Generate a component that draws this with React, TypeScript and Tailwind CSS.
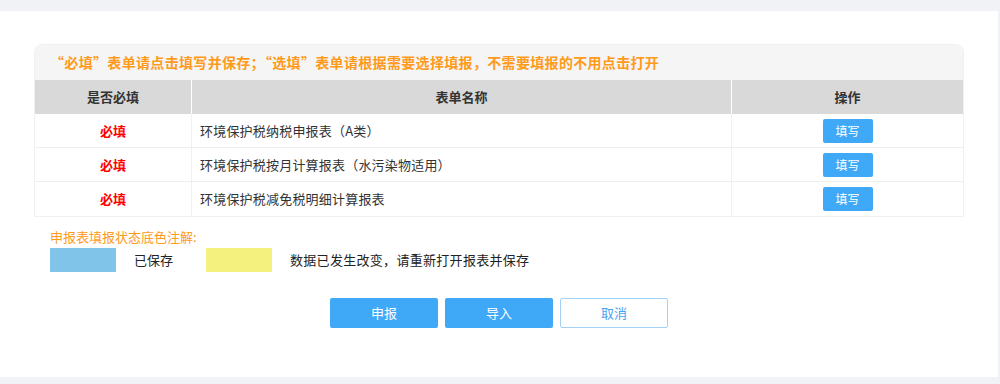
import React from "react";

const rows = [
  "环境保护税纳税申报表（A类）",
  "环境保护税按月计算报表（水污染物适用）",
  "环境保护税减免税明细计算报表",
];

export default function App() {
  return (
    <div
      lang="zh-CN"
      className="h-[384px] w-[1000px] bg-[#f0f2f5] pt-[11px] pb-[7px] pr-[2px]"
      style={{ fontFamily: '"Noto Sans CJK SC", "Noto Sans", sans-serif' }}
    >
      <div className="h-full bg-white px-[34px] pt-[33px] flex flex-col">
        <div className="rounded-t-[8px] border border-[#f0f0f0] bg-white">
          <div className="h-[35px] bg-[#f5f5f5] rounded-t-[8px] flex items-center pl-[15px] text-[14px] font-bold tracking-[0.33px] text-[#ff9a1a]">
            “必填”表单请点击填写并保存；“选填”表单请根据需要选择填报，不需要填报的不用点击打开
          </div>
          <div className="grid grid-cols-[157px_540px_1fr] h-[34px] bg-[#d9d9d9] text-[13px] font-bold text-[#333]">
            <div className="flex items-center justify-center border-r border-white">是否必填</div>
            <div className="flex items-center justify-center border-r border-white">表单名称</div>
            <div className="flex items-center justify-center">操作</div>
          </div>
          {rows.map((r, i) => (
            <div
              key={i}
              className={`grid grid-cols-[157px_540px_1fr] h-[34px] text-[13px] text-[#333] ${i < rows.length - 1 ? "border-b border-[#efefef]" : ""}`}
            >
              <div className="flex items-center justify-center border-r border-[#f0f0f0] font-bold text-[#ff0000]">必填</div>
              <div className="flex items-center pl-[8px] border-r border-[#f0f0f0] tracking-[0.2px]">{r}</div>
              <div className="flex items-center justify-center">
                <button className="w-[50px] h-[24px] rounded-[2px] bg-[#3fa9f7] text-white text-[12px] flex items-center justify-center">
                  填写
                </button>
              </div>
            </div>
          ))}
        </div>
        <div className="pl-[16px] pt-[12px] text-[13px]">
          <div className="text-[#ff9a1a] leading-[16px]">申报表填报状态底色注解:</div>
          <div className="mt-[3px] flex items-center h-[24px]">
            <div className="w-[66px] h-[24px] bg-[#80c4ea]"></div>
            <div className="ml-[18px] w-[72px] text-[#222]">已保存</div>
            <div className="w-[66px] h-[24px] bg-[#f5f17f]"></div>
            <div className="ml-[18px] text-[#222] tracking-[0.3px]">数据已发生改变，请重新打开报表并保存</div>
          </div>
        </div>
        <div className="mt-[26px] flex justify-center gap-[7px] text-[13px]">
          <button className="w-[108px] h-[30px] rounded-[2px] bg-[#3fa9f7] text-white">申报</button>
          <button className="w-[108px] h-[30px] rounded-[2px] bg-[#3fa9f7] text-white">导入</button>
          <button className="w-[108px] h-[30px] rounded-[2px] bg-white border border-[#9fd2fa] text-[#4aa3f0]">取消</button>
        </div>
      </div>
    </div>
  );
}
